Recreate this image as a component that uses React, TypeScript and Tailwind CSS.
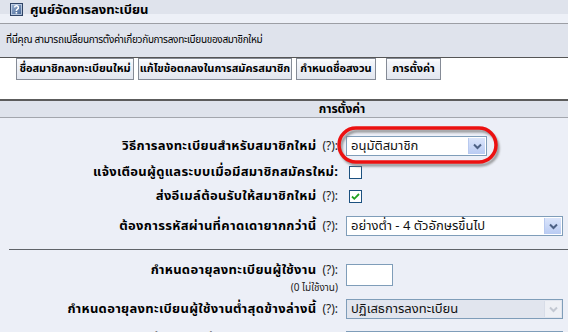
import React from "react";

const font = "font-['Tahoma','Noto_Sans_Thai','Noto_Sans','DejaVu_Sans',sans-serif]";

function HelpIcon() {
  return (
    <svg width="13" height="13" viewBox="0 0 13 13">
      <defs>
        <linearGradient id="hg" x1="0" y1="0" x2="1" y2="1">
          <stop offset="0" stopColor="#9fb6d6" />
          <stop offset="1" stopColor="#3f5f8f" />
        </linearGradient>
      </defs>
      <rect x="0.5" y="0.5" width="12" height="12" fill="url(#hg)" stroke="#2f4466" />
      <rect x="1.5" y="1.5" width="10" height="10" fill="none" stroke="#c9d6ea" strokeWidth="0.8" />
      <path d="M4.6 4.6 a1.9 1.9 0 1 1 2.7 1.7 c-0.6 0.3 -0.9 0.7 -0.9 1.3 v0.5" fill="none" stroke="#fff" strokeWidth="1.5" />
      <rect x="5.6" y="9" width="1.6" height="1.6" fill="#fff" />
    </svg>
  );
}

function Chevron({ faded }: { faded?: boolean }) {
  return (
    <span
      className={
        "flex h-full w-[17px] items-center justify-center border-l " +
        (faded ? "border-[#d8dde8] bg-[#eef0f5]" : "border-[#b8c9ef] bg-[linear-gradient(to_bottom,#dbe5fb,#b9cbf3)]")
      }
    >
      <svg width="9" height="7" viewBox="0 0 9 7">
        <path d="M1 1.5 L4.5 5 L8 1.5" fill="none" stroke={faded ? "#c3c8d2" : "#4d6185"} strokeWidth="2" />
      </svg>
    </span>
  );
}

function Select({ text, w, disabled }: { text: string; w: string; disabled?: boolean }) {
  return (
    <div
      className={
        "flex h-[20px] items-stretch border border-[#7f9db9] p-[1px] " +
        w +
        (disabled ? " bg-[#e1e5ee]" : " bg-white")
      }
    >
      <span className="flex flex-1 items-center pl-[3px] text-[13px] leading-none text-[#111]">{text}</span>
      <Chevron faded={disabled} />
    </div>
  );
}

function Checkbox({ checked }: { checked?: boolean }) {
  return (
    <span className="ml-[3px] flex h-[13px] w-[13px] items-center justify-center border border-[#1c5180] bg-white">
      {checked && (
        <svg width="9" height="9" viewBox="0 0 9 9">
          <path d="M1 4.5 L3.3 6.8 L8 2" fill="none" stroke="#21a121" strokeWidth="1.8" />
        </svg>
      )}
    </span>
  );
}

function Label({ text, help = true }: { text: string; help?: boolean }) {
  return (
    <div className="w-[338px] shrink-0 whitespace-nowrap text-right text-[13px] leading-none text-black">
      <span className="font-bold tracking-[0.3px]">{text}</span>
      {help ? (
        <span className="ml-[6px] text-[12px] text-[#222]">(?):</span>
      ) : (
        <span className="font-bold">:</span>
      )}
    </div>
  );
}

function Tab({ text, cls }: { text: string; cls: string }) {
  return (
    <div
      className={
        "flex h-[22px] items-center justify-center whitespace-nowrap border border-[#858b96] bg-[linear-gradient(to_bottom,#ffffff_0,#f3f5fa_3px,#e2e6ef_100%)] text-[11px] font-bold text-black " +
        cls
      }
    >
      {text}
    </div>
  );
}

export default function App() {
  return (
    <div className={"relative h-[332px] w-[568px] overflow-hidden bg-white " + font}>
      <div className="w-[684px]">
        {/* title */}
        <div className="flex h-[24px] items-start border-b border-[#9c9ea4] bg-[linear-gradient(to_bottom,#dfe3ec_0,#dfe3ec_14px,#edf0f7_14px)] pl-[10px] pt-[3px]">
          <HelpIcon />
          <span className="ml-[7px] text-[13px] font-bold leading-[14px] text-black">ศูนย์จัดการลงทะเบียน</span>
        </div>
        {/* description */}
        <div className="flex h-[34px] items-center border-b border-[#555] bg-[#dfe3ec] pl-[6px] text-[10px] tracking-[-0.3px] text-black">
          ที่นี่คุณ สามารถเปลี่ยนการตั้งค่าเกี่ยวกับการลงทะเบียนของสมาชิกใหม่
        </div>
        {/* tabs */}
        <div className="flex h-[41px] items-start bg-white">
          <Tab text="ชื่อสมาชิกลงทะเบียนใหม่" cls="ml-[16px] w-[118px]" />
          <Tab text="แก้ไขข้อตกลงในการสมัครสมาชิก" cls="ml-[4px] w-[154px]" />
          <Tab text="กำหนดชื่อสงวน" cls="ml-[4px] w-[80px]" />
          <Tab text="การตั้งค่า" cls="ml-[10px] w-[55px]" />
        </div>
        {/* settings panel */}
        <div className="border-t-2 border-[#5c5c5c]">
          <div className="flex h-[17px] items-center border-b border-[#a3a6ad] bg-[#dfe3ec] text-[12px] font-bold text-black">
            <span className="w-full text-center">การตั้งค่า</span>
          </div>
          <div className="bg-[#eceff7] pt-[13px]">
            <div className="flex h-[30px] items-center">
              <Label text="วิธีการลงทะเบียนสำหรับสมาชิกใหม่" />
              <div className="ml-[8px]">
                <Select text="อนุมัติสมาชิก" w="w-[141px]" />
              </div>
            </div>
            <div className="flex h-[23px] items-center">
              <Label text="แจ้งเตือนผู้ดูแลระบบเมื่อมีสมาชิกสมัครใหม่" help={false} />
              <div className="ml-[8px]">
                <Checkbox />
              </div>
            </div>
            <div className="flex h-[24px] items-center">
              <Label text="ส่งอีเมล์ต้อนรับให้สมาชิกใหม่" />
              <div className="ml-[8px]">
                <Checkbox checked />
              </div>
            </div>
            <div className="flex h-[36px] items-center">
              <Label text="ต้องการรหัสผ่านที่คาดเดายากกว่านี้" />
              <div className="ml-[8px]">
                <Select text="อย่างต่ำ - 4 ตัวอักษรขึ้นไป" w="w-[217px]" />
              </div>
            </div>
            <div className="ml-[9px] mt-[5px] border-t border-[#5f6369]" />
            <div className="flex h-[45px] items-start pt-[13px]">
              <div className="w-[338px] shrink-0 whitespace-nowrap text-right leading-none">
                <div className="pt-[1px] text-[13px]">
                  <span className="font-bold tracking-[0.3px]">กำหนดอายุลงทะเบียนผู้ใช้งาน</span>
                  <span className="ml-[6px] text-[12px] text-[#222]">(?):</span>
                </div>
                <div className="mt-[6px] text-[10px] leading-[11px] text-[#222]">(0 ไม่ใช้งาน)</div>
              </div>
              <div className="ml-[8px] mt-[1px] h-[22px] w-[47px] border border-[#7f9db9] bg-white" />
            </div>
            <div className="flex h-[28px] items-center">
              <Label text="กำหนดอายุลงทะเบียนผู้ใช้งานต่ำสุดข้างล่างนี้" />
              <div className="ml-[8px]">
                <Select text="ปฏิเสธการลงทะเบียน" w="w-[217px]" disabled />
              </div>
            </div>
            <div className="flex h-[30px] items-center pt-[6px]">
              <Label text="ที่อยู่อีเมล์ที่ไม่อนุญาตให้สมัคร" />
              <div className="ml-[8px]">
                <Select text="" w="w-[217px]" disabled />
              </div>
            </div>
          </div>
        </div>
      </div>
      {/* red highlight ellipse */}
      <svg className="pointer-events-none absolute left-[336px] top-[125px]" width="166" height="44" viewBox="0 0 166 44">
        <defs>
          <filter id="sh" x="-10%" y="-30%" width="120%" height="160%">
            <feGaussianBlur stdDeviation="1.2" />
          </filter>
        </defs>
        <rect x="5" y="6" width="157" height="34" rx="17" fill="none" stroke="#7d7d7d" strokeWidth="3" filter="url(#sh)" opacity="0.8" />
        <rect x="3" y="3" width="157" height="34" rx="17" fill="none" stroke="#ec1111" strokeWidth="3.5" />
      </svg>
    </div>
  );
}
